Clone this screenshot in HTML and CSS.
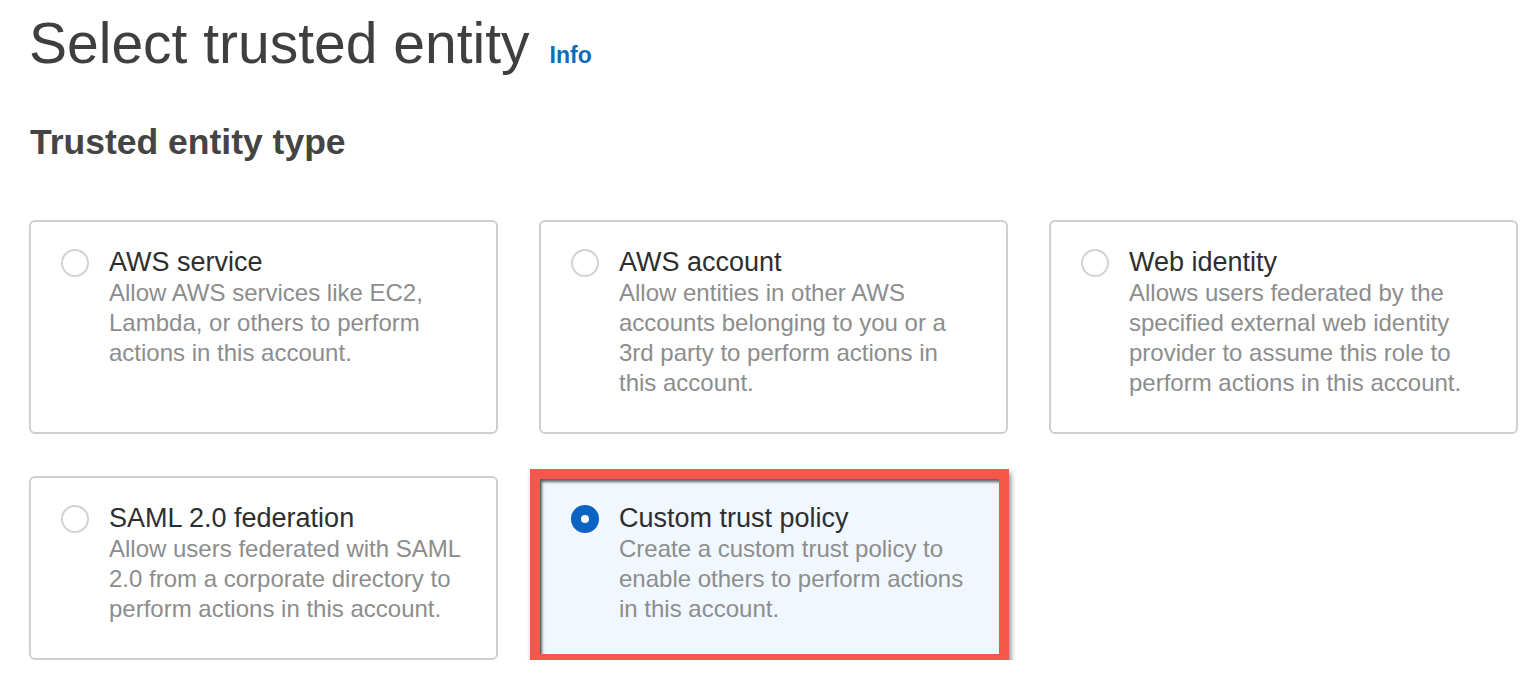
FILE: index.html
```html
<!DOCTYPE html>
<html lang="en">
<head>
<meta charset="utf-8">
<title>Select trusted entity</title>
<link rel="stylesheet" href="styles.css">
</head>
<body>
<main class="page">
  <header class="page-header">
    <h1 class="page-title">Select trusted entity</h1>
    <a class="info-link" href="#">Info</a>
  </header>
  <h2 class="section-title">Trusted entity type</h2>
  <div class="tile-grid">
    <label class="tile">
      <span class="radio"></span>
      <span class="tile-text">
        <span class="tile-title">AWS service</span>
        <span class="tile-desc">Allow AWS services like EC2, Lambda, or others to perform actions in this account.</span>
      </span>
    </label>
    <label class="tile">
      <span class="radio"></span>
      <span class="tile-text">
        <span class="tile-title">AWS account</span>
        <span class="tile-desc">Allow entities in other AWS accounts belonging to you or a 3rd party to perform actions in this account.</span>
      </span>
    </label>
    <label class="tile">
      <span class="radio"></span>
      <span class="tile-text">
        <span class="tile-title">Web identity</span>
        <span class="tile-desc">Allows users federated by the specified external web identity provider to assume this role to perform actions in this account.</span>
      </span>
    </label>
    <label class="tile">
      <span class="radio"></span>
      <span class="tile-text">
        <span class="tile-title">SAML 2.0 federation</span>
        <span class="tile-desc">Allow users federated with SAML 2.0 from a corporate directory to perform actions in this account.</span>
      </span>
    </label>
    <label class="tile tile-selected">
      <span class="radio radio-checked"></span>
      <span class="tile-text">
        <span class="tile-title">Custom trust policy</span>
        <span class="tile-desc">Create a custom trust policy to enable others to perform actions in this account.</span>
      </span>
      <span class="highlight"></span>
    </label>
  </div>
</main>
</body>
</html>
```
FILE: styles.css
```css
* { box-sizing: border-box; }

html, body {
  margin: 0;
  padding: 0;
  background: #ffffff;
}

body {
  font-family: "Liberation Sans", Arial, Helvetica, sans-serif;
  color: #444444;
}

.page {
  padding: 10px 0 0 29px;
}

.page-header {
  display: flex;
  align-items: baseline;
  gap: 20px;
}

.page-title {
  margin: 0;
  font-size: 57px;
  font-weight: 400;
  line-height: 66px;
  color: #3f3f3f;
}

.info-link {
  font-size: 23px;
  font-weight: 700;
  color: #0f6cbd;
  text-decoration: none;
}

.section-title {
  margin: 46px 0 0 1px;
  font-size: 35.5px;
  font-weight: 700;
  line-height: 40px;
  color: #444444;
}

.tile-grid {
  margin-top: 58px;
  display: grid;
  grid-template-columns: repeat(3, 469px);
  column-gap: 41px;
  row-gap: 42px;
}

.tile {
  position: relative;
  display: flex;
  align-items: flex-start;
  gap: 20px;
  padding: 25px 26px 34px 30px;
  border: 2px solid #cfcfcf;
  border-radius: 6px;
  background: #ffffff;
}

.radio {
  flex: none;
  width: 28px;
  height: 28px;
  margin-top: 2px;
  border: 2px solid #d2d2d2;
  border-radius: 50%;
  background: #ffffff;
}

.radio-checked {
  border: 10px solid #0b64c2;
  background: #ffffff;
}

.tile-text {
  display: flex;
  flex-direction: column;
  min-width: 0;
}

.tile-title {
  font-size: 27px;
  line-height: 31px;
  color: #2e2e2e;
}

.tile-desc {
  font-size: 24px;
  line-height: 30px;
  color: #8d8d8d;
}

.tile-selected {
  background: #f0f7fe;
}

.highlight {
  position: absolute;
  left: -11px;
  top: -9px;
  right: -3px;
  bottom: -6px;
  border: 10px solid #f5574b;
  box-shadow: 2px 4px 5px rgba(0, 0, 0, 0.45), inset 2px 3px 3px rgba(0, 0, 0, 0.6);
  pointer-events: none;
}
```
